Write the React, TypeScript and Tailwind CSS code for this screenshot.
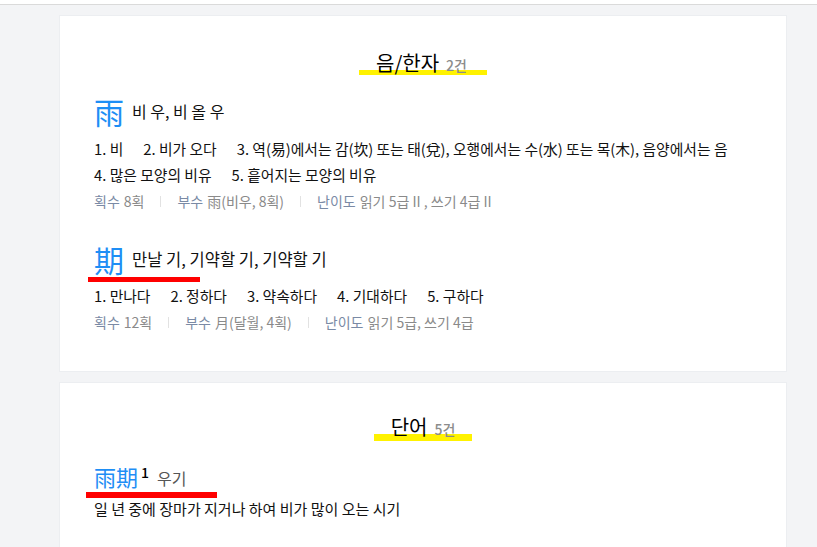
import React from "react";

function Title({ text, count, bar, pr }: { text: string; count: string; bar: string; pr: string }) {
  return (
    <div className="flex justify-center">
      <div className={`relative inline-block pl-[17px] ${pr} leading-[28px] whitespace-nowrap`}>
        <div className={`absolute left-0 right-0 bg-[#fff200] ${bar}`} />
        <span className="relative text-[20px] text-black">{text}</span>
        <span className="relative ml-[7px] text-[14px] font-medium text-[#8c8c8c]">{count}</span>
      </div>
    </div>
  );
}

function Defs({ items }: { items: string[] }) {
  return (
    <div className="flex flex-wrap gap-x-[20px] text-[14.8px] leading-[26px] text-[#111]">
      {items.map((t) => (
        <span key={t} className="whitespace-nowrap">
          {t}
        </span>
      ))}
    </div>
  );
}

function Meta({ items }: { items: [string, string][] }) {
  return (
    <div className="flex items-center text-[14px] leading-[24px] whitespace-nowrap">
      {items.map(([label, value], i) => (
        <React.Fragment key={label}>
          {i > 0 && <span className="mx-[16px] inline-block w-px h-[11px] bg-[#e2e2e2]" />}
          <span className="text-[#7a8aa5]">{label}</span>
          <span className="ml-[4px] text-[#8a8a8a]">{value}</span>
        </React.Fragment>
      ))}
    </div>
  );
}

export default function App() {
  return (
    <div className="min-h-[547px] bg-[#f3f4f6] font-['Noto_Sans_CJK_KR',sans-serif] text-[#111] overflow-hidden">
      <div className="h-[5px] bg-white border-b border-[#dadada]" />
      <div className="pt-[10px] pl-[59px] w-[787px] flex flex-col gap-[10px]">
        <section className="bg-white border border-[#eceef1] px-[34px] pt-[33px] pb-[37px]">
          <Title text="음/한자" count="2건" bar="bottom-[4px] h-[5px]" pr="pr-[20px]" />

          <div className="mt-[15px] flex items-center h-[34px]">
            <span className="text-[30px] leading-[34px] text-[#1e8ef5]">雨</span>
            <span className="ml-[8px] text-[16px] leading-[34px] text-[#111]">비 우, 비 올 우</span>
          </div>
          <div className="mt-[8px]">
            <Defs
              items={[
                "1. 비",
                "2. 비가 오다",
                "3. 역(易)에서는 감(坎) 또는 태(兌), 오행에서는 수(水) 또는 목(木), 음양에서는 음",
                "4. 많은 모양의 비유",
                "5. 흩어지는 모양의 비유",
              ]}
            />
          </div>
          <div className="mt-px">
            <Meta
              items={[
                ["획수", "8획"],
                ["부수", "雨(비우, 8획)"],
                ["난이도", "읽기 5급 II , 쓰기 4급 II"],
              ]}
            />
          </div>

          <div className="mt-[29px] flex items-center h-[34px]">
            <span className="text-[30px] leading-[34px] text-[#1e8ef5]">期</span>
            <span className="ml-[8px] text-[16.5px] leading-[34px] text-[#111]">만날 기, 기약할 기, 기약할 기</span>
          </div>
          <div className="mt-px -ml-[6px] w-[112px] h-[5px] bg-[#ff0000]" />
          <div className="mt-px">
            <Defs items={["1. 만나다", "2. 정하다", "3. 약속하다", "4. 기대하다", "5. 구하다"]} />
          </div>
          <div className="mt-px">
            <Meta
              items={[
                ["획수", "12획"],
                ["부수", "月(달월, 4획)"],
                ["난이도", "읽기 5급, 쓰기 4급"],
              ]}
            />
          </div>
        </section>

        <section className="bg-white border border-[#eceef1] px-[34px] pt-[30px] pb-[40px]">
          <Title text="단어" count="5건" bar="bottom-[2px] h-[7px]" pr="pr-[17px]" />

          <div className="mt-[20px] flex items-center h-[26px] whitespace-nowrap">
            <span className="text-[22px] leading-[26px] text-[#1e8ef5]">雨期</span>
            <span className="relative -top-[4px] ml-[3px] text-[14px] font-medium leading-[26px] text-black">1</span>
            <span className="relative top-[2px] ml-[8px] text-[16px] leading-[26px] text-[#555]">우기</span>
          </div>
          <div className="mt-[3px] -ml-[8px] w-[131px] h-[6px] bg-[#ff0000]" />
          <div className="-mt-[2px] text-[15px] leading-[26px] text-[#111]">
            일 년 중에 장마가 지거나 하여 비가 많이 오는 시기
          </div>
        </section>
      </div>
    </div>
  );
}
